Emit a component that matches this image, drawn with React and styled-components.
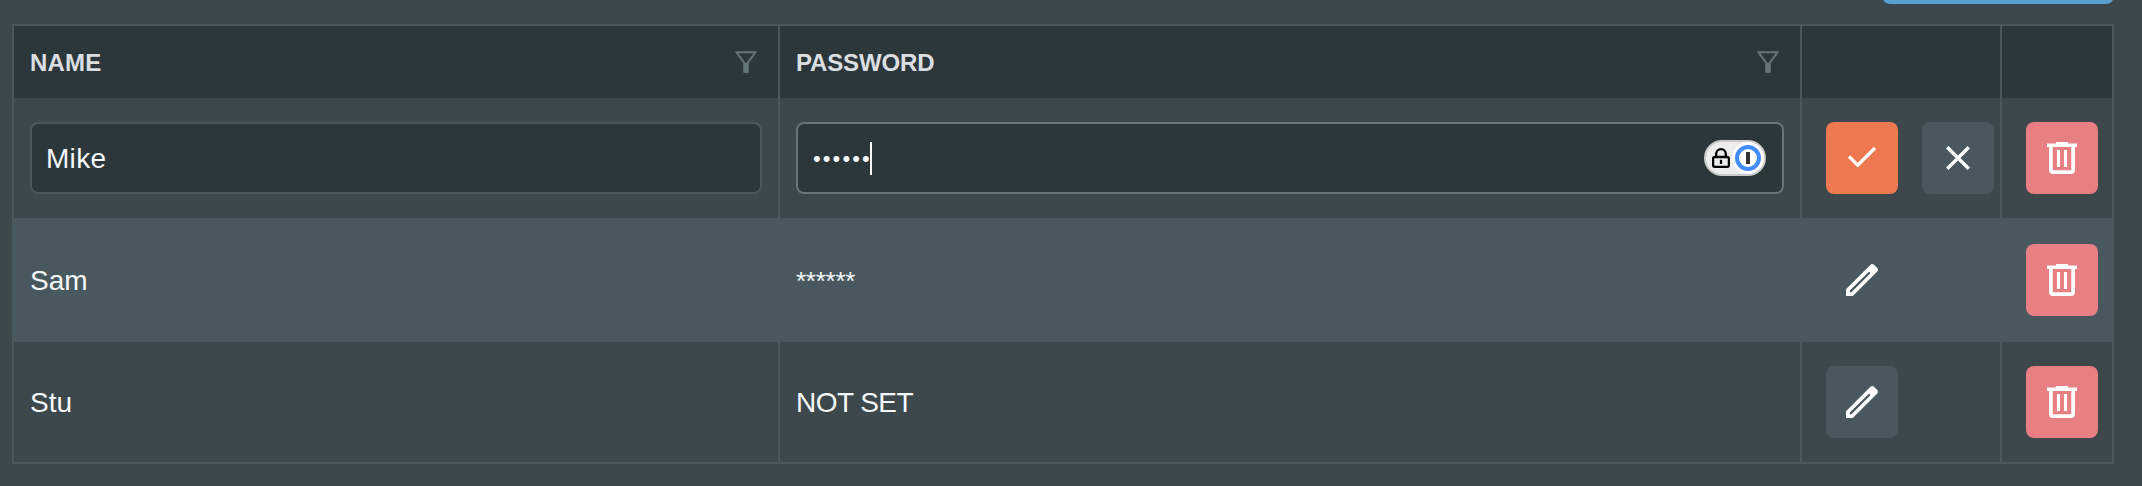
import React from "react";
import styled, { createGlobalStyle } from "styled-components";

const c = {
  page: "#3d484d",
  line: "#49585e",
  head: "#2c373b",
  focus: "#66757a",
  text: "#f5f8fa",
  headText: "#dcdfe2",
  filter: "#66757a",
  orange: "#ee784f",
  red: "#e87f82",
  blue: "#5a9fd4",
};

const Global = createGlobalStyle`
  * { box-sizing: border-box; }
  body {
    margin: 0;
    background: ${c.page};
    color: ${c.text};
    font-family: "Liberation Sans", Arial, sans-serif;
    font-size: 28px;
    line-height: 34px;
    overflow: hidden;
  }
`;

const Page = styled.main`
  display: flex;
  flex-direction: column;
  width: 2142px;
  height: 486px;
  padding: 0 28px 0 12px;
  overflow: hidden;
`;

const AddButton = styled.button`
  align-self: flex-end;
  flex: none;
  width: 232px;
  height: 60px;
  margin: -56px 0 20px;
  padding: 0;
  border: 0;
  border-radius: 8px;
  background: ${c.blue};
`;

const Table = styled.div`
  flex: none;
  width: 2102px;
  border: 2px solid ${c.line};
  border-right: 0;
`;

const Row = styled.div`
  display: grid;
  grid-template-columns: 766px 1022px 200px 112px;
  height: ${(p) => (p.$header ? "72px" : "120px")};
  background: ${(p) => (p.$header ? c.head : p.$striped ? c.line : "transparent")};
`;

const Rule = styled.div`
  height: 2px;
  background: ${c.line};
`;

const Cell = styled.div`
  display: flex;
  align-items: center;
  padding: 0 16px;
  border-right: 2px solid ${c.line};
`;

const HeadCell = styled(Cell)`
  justify-content: space-between;
  padding-right: 21px;
  color: ${c.headText};
  font-size: 24px;
  font-weight: 700;
`;

const ActionCell = styled(Cell)`
  gap: 24px;
  padding: 0 0 0 24px;
`;

const Label = styled.span`
  padding-top: 2px;
  letter-spacing: ${(p) => p.$tracking || 0}px;
`;

const Stars = styled(Label)`
  font-size: 26px;
  letter-spacing: -0.25px;
`;

const Dots = styled.span`
  padding: 1px 0 0 1px;
  font-size: 22px;
  letter-spacing: 2.1px;
`;

const Field = styled.div`
  display: flex;
  align-items: center;
  width: 100%;
  height: 72px;
  padding: 0 16px 0 14px;
  border: 2px solid ${(p) => (p.$focused ? c.focus : c.line)};
  border-radius: 8px;
  background: ${c.head};
`;

const Caret = styled.span`
  width: 2px;
  height: 33px;
  margin-left: -2px;
  background: #fff;
`;

const IconButton = styled.button`
  display: flex;
  align-items: center;
  justify-content: center;
  flex: none;
  width: 72px;
  height: 72px;
  padding: 0;
  border: 0;
  border-radius: 8px;
  color: #fff;
  background: ${(p) => p.$color || c.line};
`;

const Badge = styled.span`
  display: flex;
  align-items: center;
  justify-content: space-between;
  width: 62px;
  height: 36px;
  margin-left: auto;
  padding: 0 0 0 6px;
  border: 2px solid #cbcbcb;
  border-radius: 18px;
  background: #ededed;
`;

const FilterIcon = () => (
  <svg width="22" height="22" viewBox="0 0 22 22" fill="none">
    <path d="M1.3 1.2h19.4L12.6 12v8.8H9.4V12z" stroke={c.filter} strokeWidth="2" strokeLinejoin="round" />
    <path d="M8.6 12h4.8v9.8H8.6z" fill={c.filter} />
  </svg>
);

const CheckIcon = () => (
  <svg width="32" height="32" viewBox="0 0 32 32" fill="none">
    <path d="M3 14.5l8.7 8.7L29 6" stroke="currentColor" strokeWidth="3.3" />
  </svg>
);

const CloseIcon = () => (
  <svg width="24" height="24" viewBox="0 0 24 24" fill="none">
    <path d="M1.2 1.2l21.6 21.6M22.8 1.2L1.2 22.8" stroke="currentColor" strokeWidth="3.4" />
  </svg>
);

const TrashIcon = () => (
  <svg width="30" height="32" viewBox="0 0 30 32" fill="none">
    <path d="M0 1.6h9V0h12v1.6h9V5H0z" fill="currentColor" />
    <path d="M3.9 4v24q0 2.1 2.1 2.1h18q2.1 0 2.1-2.1V4" stroke="currentColor" strokeWidth="3.7" />
    <path d="M11.5 8v17M18.5 8v17" stroke="currentColor" strokeWidth="3.1" />
  </svg>
);

const PencilIcon = () => (
  <svg width="32" height="32" viewBox="0 0 32 32" fill="none">
    <path
      fillRule="evenodd"
      d="M0 25.2L24.2 1q2-2 4 0L31 3.8q2 2 0 4L6.8 32H0zM3.8 26.6v1.6h1.6L23.9 9.7q.6-.8 0-1.4t-1.5 0z"
      fill="currentColor"
    />
  </svg>
);

const LockIcon = () => (
  <svg width="18" height="20" viewBox="0 0 18 20" fill="none" stroke="#000" strokeWidth="2.3">
    <path d="M4.2 9V6a4.8 4.8 0 0 1 9.6 0v3" />
    <rect x="1.1" y="9" width="15.8" height="9.8" rx="1.6" />
    <path d="M9 11.8v4.2" />
  </svg>
);

const KeyholeIcon = () => (
  <svg width="32" height="32" viewBox="0 0 32 32">
    <circle cx="16" cy="16" r="16" fill="#fff" />
    <circle cx="16" cy="16" r="11" fill="#fff" stroke="#448bfb" strokeWidth="4" />
    <rect x="14" y="10" width="4" height="12" fill="#333" />
  </svg>
);

const DeleteCell = () => (
  <ActionCell>
    <IconButton $color={c.red} aria-label="Delete"><TrashIcon /></IconButton>
  </ActionCell>
);

const UserRow = ({ name, password, striped }) => (
  <>
    <Rule />
    <Row $striped={striped}>
      <Cell><Label>{name}</Label></Cell>
      <Cell>{password}</Cell>
      <ActionCell>
        <IconButton aria-label="Edit"><PencilIcon /></IconButton>
      </ActionCell>
      <DeleteCell />
    </Row>
  </>
);

export default function App() {
  return (
    <Page>
      <Global />
      <AddButton aria-label="Add user" />
      <Table>
        <Row $header>
          <HeadCell><Label $tracking={0.2}>NAME</Label><FilterIcon /></HeadCell>
          <HeadCell><Label $tracking={-0.15}>PASSWORD</Label><FilterIcon /></HeadCell>
          <HeadCell />
          <HeadCell />
        </Row>
        <Row>
          <Cell><Field><Label $tracking={0.3}>Mike</Label></Field></Cell>
          <Cell>
            <Field $focused>
              <Dots>••••••</Dots>
              <Caret />
              <Badge><LockIcon /><KeyholeIcon /></Badge>
            </Field>
          </Cell>
          <ActionCell>
            <IconButton $color={c.orange} aria-label="Save"><CheckIcon /></IconButton>
            <IconButton aria-label="Cancel"><CloseIcon /></IconButton>
          </ActionCell>
          <DeleteCell />
        </Row>
        <UserRow name="Sam" password={<Stars>******</Stars>} striped />
        <UserRow name="Stu" password={<Label $tracking={-0.55}>NOT SET</Label>} />
      </Table>
    </Page>
  );
}
